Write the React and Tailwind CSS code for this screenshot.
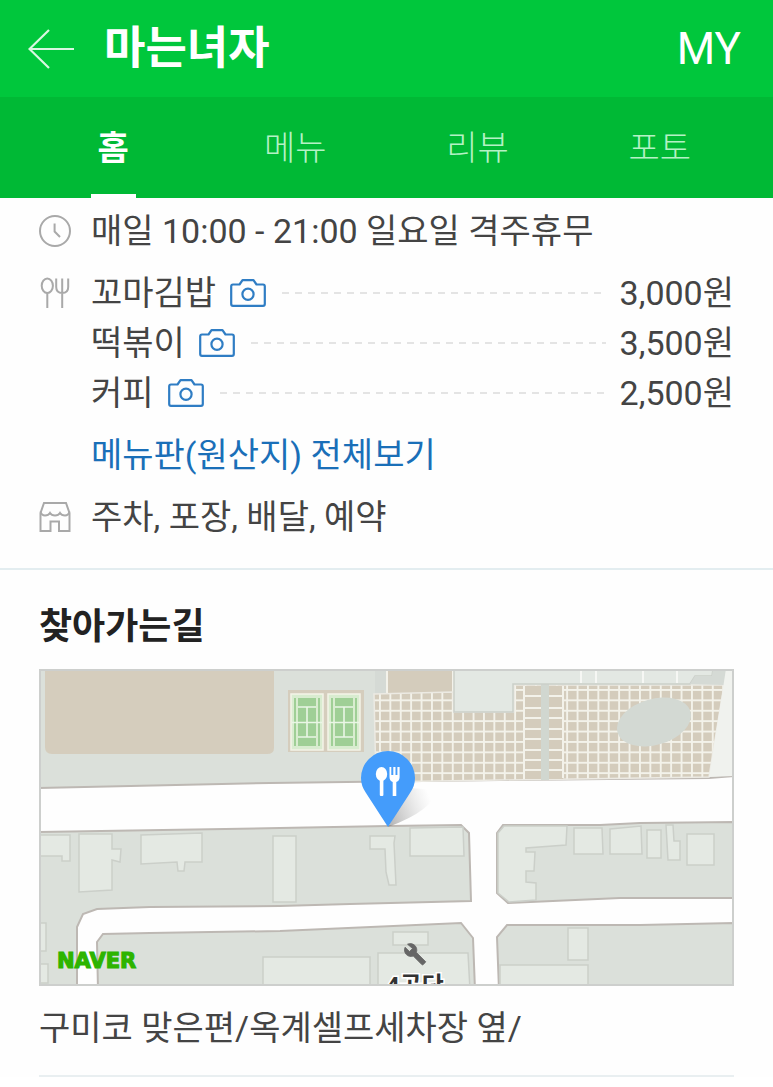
const TABS = ["홈", "메뉴", "리뷰", "포토"];

const MENU = [
  { name: "꼬마김밥", price: "3,000원" },
  { name: "떡볶이", price: "3,500원" },
  { name: "커피", price: "2,500원" },
];

const BLOCKS = [
  "39,669 734,669 734,776 709,778 500,780 270,783 39,788",
  "39,832 280,828 388,826 461,825 469,833 471,901 350,904 280,906 150,907 97,909 83,914 77,927 77,990 39,990",
  "98,990 97,942 103,934 150,933 280,931 461,923 473,938 475,990",
  "503,825 600,825 640,823 734,822 734,898 620,898 508,903 497,893 497,833",
  "507,925 640,925 734,923 734,990 499,990 497,937",
];

const BUILDINGS = [
  "39,835 70,835 70,861 62,861 62,856 39,856",
  "79,834 112,834 112,849 121,849 120,862 112,860 112,890 79,892",
  "141,835 202,833 202,862 185,862 184,871 178,871 177,862 141,864",
  "273,836 296,836 296,902 273,902",
  "39,923 46,923 46,951 39,951",
  "39,964 48,964 48,983 39,983",
  "263,957 370,957 370,990 263,990",
  "370,836 395,836 394,843 396,885 389,885 386,872 385,849 370,849",
  "410,828 463,827 464,856 410,856",
  "393,932 428,932 428,945 393,945",
  "378,953 468,953 470,990 378,990",
  "504,826 567,826 566,845 526,848 526,852 535,852 534,871 526,871 526,882 536,883 536,900 509,902 498,893 498,833",
  "574,828 602,828 603,854 574,854",
  "610,829 641,826 642,854 610,854",
  "647,830 661,830 661,858 647,858",
  "666,825 673,825 674,841 680,841 680,860 668,860",
  "687,834 714,834 714,865 687,865",
  "568,928 588,928 588,960 568,960",
  "500,965 588,965 588,990 500,990",
];

function CameraIcon() {
  return (
    <svg className="h-7 w-9 shrink-0" viewBox="0 0 36 28" fill="none" stroke="#2f7dc4" strokeWidth="2.200" strokeLinejoin="round">
      <path d="M3 5.500H9.500L12.500 1.200H23.500L26.500 5.500H33Q34.800 5.500 34.800 7.300V25Q34.800 26.800 33 26.800H3Q1.200 26.800 1.200 25V7.300Q1.200 5.500 3 5.500Z" />
      <circle cx="18" cy="15.300" r="5.600" />
    </svg>
  );
}

function ClockIcon() {
  return (
    <svg className="size-8" viewBox="0 0 32 32" fill="none" stroke="#a9a9a9" strokeWidth="2">
      <circle cx="16" cy="16" r="15" />
      <path d="M15.600 8.500V16.500L21 22" />
    </svg>
  );
}

function CutleryIcon() {
  return (
    <svg className="size-8" viewBox="0 0 32 32" fill="none" stroke="#a9a9a9" strokeWidth="2">
      <ellipse cx="8.300" cy="8.800" rx="5.600" ry="7.300" />
      <path d="M8.300 16V31M17.200 1.500V10Q17.200 16 23.200 16Q29.200 16 29.200 10V1.500M23.200 1.500V31" />
    </svg>
  );
}

function StoreIcon() {
  return (
    <svg className="size-8" viewBox="0 0 32 32" fill="none" stroke="#a9a9a9" strokeWidth="2">
      <path d="M1.500 12V30H11.500V20.500H20V30H30.500V12M1.500 12L5 2H27L30.500 12" />
      <path d="M1.500 10.500Q2.500 14.500 6 14.500Q9.500 14.500 11 12Q12.500 14.500 16 14.500Q19.500 14.500 21 12Q22.500 14.500 26 14.500Q29.500 14.500 30.500 10.500" />
    </svg>
  );
}

function TennisCourt({ x }) {
  return (
    <g transform={`translate(${x} 694)`}>
      <rect width="32" height="56" fill="#d9ecd0" stroke="#f3f3e8" strokeWidth="1.500" />
      <path d="M4 4V52M28 4V52" stroke="#9fcf96" strokeWidth="2" />
      <rect x="7" y="4" width="18" height="48" fill="#9fcf96" />
      <path d="M7 13H25M7 43H25M1 28.500H31M16 13V43" stroke="#eaf6e6" strokeWidth="1.600" />
    </g>
  );
}

function StreetMap() {
  return (
    <svg className="block w-full" viewBox="39 669 695 317" role="img" aria-label="지도">
      <defs>
        <pattern id="tiles" x="379" y="689" width="10.400" height="10.400" patternUnits="userSpaceOnUse">
          <rect width="10.400" height="10.400" fill="#d4ccbc" />
          <path d="M0 0H10.400M0 0V10.400" stroke="#f3f2ea" strokeWidth="3.800" />
        </pattern>
        <linearGradient id="shade" x1="0" y1="0.600" x2="1" y2="0.300">
          <stop offset="0" stopColor="#777" stopOpacity="0.500" />
          <stop offset="0.900" stopColor="#aaa" stopOpacity="0" />
        </linearGradient>
      </defs>
      <rect x="39" y="669" width="695" height="317" fill="#fefefe" />
      {BLOCKS.map((points) => (
        <polygon key={points} points={points} fill="#dbe0da" stroke="#bdb8b3" strokeWidth="2" />
      ))}
      {BUILDINGS.map((points) => (
        <polygon key={points} points={points} fill="#e4e9e3" stroke="#cbcfc9" strokeWidth="1.500" />
      ))}

      <path d="M45 669H274V748Q274 754 267 754H52Q45 754 45 747Z" fill="#d5cdbd" />
      <rect x="288" y="690" width="76" height="62" fill="#d5cdbd" />
      <TennisCourt x={291} />
      <TennisCourt x={328} />

      <path d="M375 694V669H387V694Z" fill="#d5dad5" />
      <rect x="387" y="669" width="66" height="26" fill="#d4ccbc" stroke="#f3f2ea" strokeWidth="2" />
      <polygon points="374,694 453,692 454,712 514,712 514,685 724,685 709,777 500,780 376,782" fill="url(#tiles)" stroke="#eceae3" strokeWidth="1.500" />
      <rect x="524" y="686" width="39" height="93" fill="#d4ccbc" />
      <path d="M524 696H563M524 708H563M524 718H563M524 729H563M524 739H563M524 750H563M524 760H563M524 770H563M524 686V779M563 686V778" stroke="#f3f2ea" strokeWidth="2" />
      <rect x="541" y="684" width="8" height="96" fill="#d1d7d0" />
      <ellipse cx="654" cy="722" rx="38" ry="23" transform="rotate(-16 654 722)" fill="#d3d9d3" />
      <path d="M454 669V712H513V684H690L695 676H712L713 669Z" fill="#e3e8e3" stroke="#cbcfc9" strokeWidth="1.500" />
      <path d="M581 671V683M596 671V683M643 671V683M677 671V683" stroke="#f6f7f4" strokeWidth="2" />
      <path d="M690 684L695 676H712L713 669H726L724 685Z" fill="#d5dad5" />
      <polygon points="726,669 734,669 734,776 709,777" fill="#f0f2ee" />

      <path d="M388 827L410 788L436 790Q434 810 388 827Z" fill="url(#shade)" />
      <path d="M388 827L366 793Q361 786 361 778A27 27 0 0 1 415 778Q415 786 410 793Z" fill="#449cfb" />
      <g fill="#fff">
        <ellipse cx="381.500" cy="774" rx="5.700" ry="7" />
        <rect x="379.800" y="779" width="3.600" height="17" rx="1" />
        <path d="M389.500 767H391.300V775H393.300V767H395.500V775H397.400V767H399.600V777Q399.600 781 396.300 782V796H392.700V782Q389.500 781 389.500 777Z" />
      </g>

      <g transform="translate(403.500 942.500)" fill="#666" stroke="#666">
        <path strokeWidth="0.800" d="M22 19l-9.100-9.100c.9-2.300.4-5-1.500-6.900-2-2-5-2.400-7.400-1.300L9 6 6 9 1.600 4.700C.4 7.100.9 10.100 2.900 12.100c1.900 1.900 4.600 2.400 6.900 1.500l8.500 8.500c.4.4 1 .4 1.400 0l2.300-2.300c.5-.4.5-.5 0-.8z" />
      </g>
      <text x="386" y="994" fontSize="24" fontWeight="700" fill="#333" stroke="#fff" strokeWidth="3" paintOrder="stroke">4공단</text>
      <text x="57" y="968" className="font-['DejaVu_Sans']" fontSize="21" fontWeight="700" fill="#2db400" stroke="#2db400" strokeWidth="1.200">NAVER</text>
      <rect x="40" y="670" width="693" height="315" fill="none" stroke="#cdcfcd" strokeWidth="2" />
    </svg>
  );
}

function InfoRow({ icon, children }) {
  return (
    <div className="flex">
      <div className="flex h-[50px] w-[52px] shrink-0 items-center">{icon}</div>
      <div className="min-w-0 grow">{children}</div>
    </div>
  );
}

export default function App() {
  return (
    <div className="bg-[#fefefe] font-['Roboto','Noto_Sans_CJK_KR',sans-serif] text-[34px] leading-[50px] text-[#444]" lang="ko">
      <header className="flex h-[97px] items-center bg-[#00c73c] pr-8 pl-7 text-white">
        <button type="button" aria-label="뒤로" className="mr-[30px] shrink-0">
          <svg className="h-10 w-[46px]" viewBox="0 0 46 40" fill="none" stroke="#d9f7e1" strokeWidth="2.200">
            <path d="M21 1L1.500 20L21 39M1.500 20H46" />
          </svg>
        </button>
        <h1 className="grow text-[45px] font-bold">마는녀자</h1>
        <a href="#my" className="text-[44px]">MY</a>
      </header>

      <nav className="grid h-[101px] grid-cols-4 bg-[#00b935] px-[22px]">
        {TABS.map((tab, i) => (
          <a
            key={tab}
            href={`#tab-${i}`}
            aria-current={i === 0 ? "page" : undefined}
            className={
              i === 0
                ? "flex flex-col items-center justify-between pt-[26px] font-bold text-white"
                : "flex flex-col items-center pt-[26px] font-light text-[#b4f2c5]"
            }
          >
            {tab}
            {i === 0 && <span className="h-1 w-[45px] bg-white" />}
          </a>
        ))}
      </nav>

      <main>
        <section className="flex flex-col gap-3 border-b-2 border-[#e3edf0] px-[39px] pt-2 pb-[26px]">
          <InfoRow icon={<ClockIcon />}>매일 10:00 - 21:00 일요일 격주휴무</InfoRow>
          <InfoRow icon={<CutleryIcon />}>
            <ul>
              {MENU.map((item) => (
                <li key={item.name} className="flex items-center">
                  <span className="mr-3.5 shrink-0">{item.name}</span>
                  <CameraIcon />
                  <span className="mr-3.5 ml-4 h-0.5 grow bg-[repeating-linear-gradient(90deg,#e4e4e4_0_7px,transparent_7px_13px)]" />
                  <span className="shrink-0">{item.price}</span>
                </li>
              ))}
            </ul>
            <a href="#menu" className="mt-3 block text-[#1a6fb8]">메뉴판(원산지) 전체보기</a>
          </InfoRow>
          <InfoRow icon={<StoreIcon />}>주차, 포장, 배달, 예약</InfoRow>
        </section>

        <section className="px-[39px] pt-8">
          <h2 className="mb-[17px] text-[36px] font-bold text-[#222]">찾아가는길</h2>
          <StreetMap />
          <p className="border-b-2 border-[#e9eff1] pt-[17px] pb-[22px]">구미코 맞은편/옥계셀프세차장 옆/</p>
        </section>
      </main>
    </div>
  );
}
